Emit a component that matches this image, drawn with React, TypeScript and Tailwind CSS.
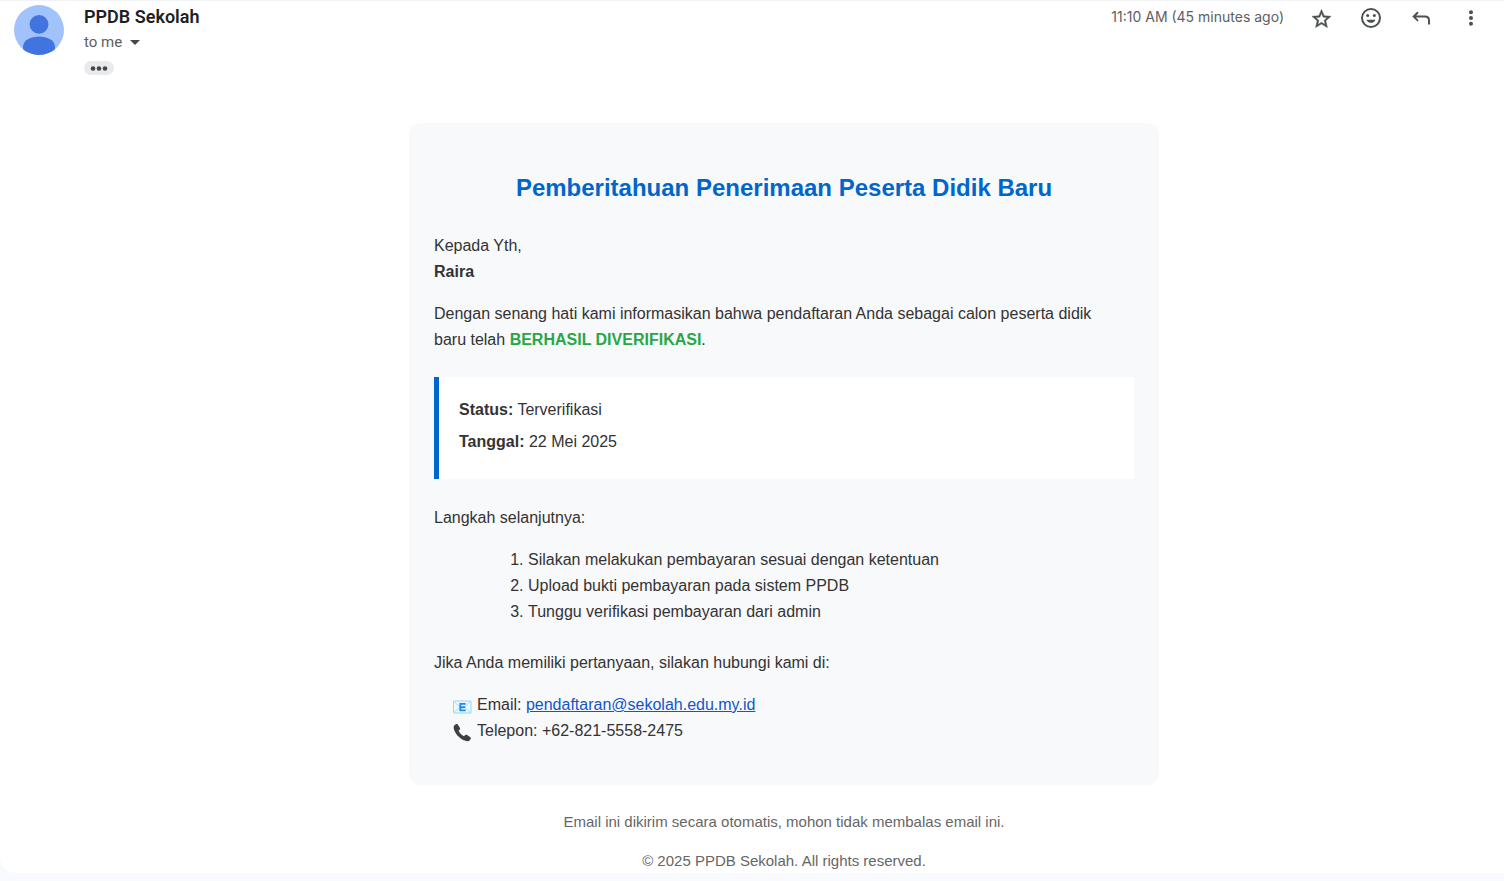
import type { ReactNode } from "react";

function IconButton({ label, children }: { label: string; children: ReactNode }) {
  return (
    <button type="button" aria-label={label} className="flex size-5 items-center justify-center text-[#4d5052]">
      {children}
    </button>
  );
}

function Avatar() {
  return (
    <svg viewBox="0 0 50 50" className="size-[50px] shrink-0" role="img" aria-label="PPDB Sekolah">
      <defs>
        <clipPath id="avatar-clip">
          <circle cx="25" cy="25" r="25" />
        </clipPath>
      </defs>
      <g clipPath="url(#avatar-clip)">
        <rect width="50" height="50" fill="#a1c2fa" />
        <circle cx="25" cy="19.3" r="9.4" fill="#4274e0" />
        <path d="M9 42c0-7 8-10.500 16-10.500S41 35 41 42v8H9z" fill="#4274e0" />
      </g>
    </svg>
  );
}

function Header() {
  return (
    <header className="flex items-start pr-[23px] pl-[14px] font-[family-name:Roboto,'Open_Sans',sans-serif]">
      <Avatar />
      <div className="ml-5 flex flex-1 flex-col items-start">
        <h1 className="text-lg leading-6 font-semibold text-[#1f1f1f]">PPDB Sekolah</h1>
        <button type="button" className="mt-px flex items-center gap-2 text-[15px] leading-6 text-[#5e5e5e]">
          to me
          <svg viewBox="0 0 10 5" className="h-[5px] w-[10px]" fill="#444746">
            <path d="M0 0h10L5 5z" />
          </svg>
        </button>
        <button
          type="button"
          aria-label="Show trimmed content"
          className="mt-[7px] flex h-[14px] w-[30px] items-center justify-center rounded-full bg-[#e8eaed]"
        >
          <svg viewBox="0 0 18 5" className="h-[5px] w-[18px]" fill="#444746">
            <circle cx="3" cy="2.5" r="2.3" />
            <circle cx="9" cy="2.5" r="2.3" />
            <circle cx="15" cy="2.5" r="2.3" />
          </svg>
        </button>
      </div>
      <div className="flex items-start gap-[30px]">
        <time className="-mr-[3px] font-[family-name:Inter,sans-serif] text-sm leading-6 text-[#5e5e5e]">
          11:10 AM (45 minutes ago)
        </time>
        <div className="flex gap-[30px] pt-[3px]">
          <IconButton label="Star">
            <svg viewBox="0 0 24 24" className="size-[23px] shrink-0" fill="currentColor" stroke="currentColor" strokeWidth="0.5">
              <path d="M22 9.74l-7.19-.62L12 2.5 9.19 9.13 2 9.74l5.46 4.73-1.64 7.03L12 17.77l6.180 3.730-1.630-7.030L22 9.740zM12 15.900l-3.760 2.270 1-4.280-3.320-2.880 4.380-.380L12 6.600l1.710 4.040 4.380.380-3.320 2.880 1 4.280L12 15.900z" />
            </svg>
          </IconButton>
          <IconButton label="Add reaction">
            <svg viewBox="0 0 20 20" className="size-5" fill="none">
              <circle cx="10" cy="10" r="9" stroke="currentColor" strokeWidth="2" />
              <circle cx="6.700" cy="7.500" r="1.500" fill="currentColor" />
              <circle cx="13.300" cy="7.500" r="1.500" fill="currentColor" />
              <path d="M5.500 11.700h9c-.700 1.900-2.400 3.100-4.500 3.100s-3.800-1.200-4.500-3.100z" fill="currentColor" />
            </svg>
          </IconButton>
          <IconButton label="Reply">
            <svg viewBox="0 0 20 20" className="size-5" fill="none" stroke="currentColor" strokeWidth="2">
              <path d="M7 4.300 2.700 8.600l4.300 4.300M2.700 8.600H14c2.600 0 4 1.600 4 4V16.500" />
            </svg>
          </IconButton>
          <IconButton label="More">
            <svg viewBox="0 0 20 20" className="size-5" fill="currentColor">
              <circle cx="10" cy="4.200" r="2" />
              <circle cx="10" cy="10" r="2" />
              <circle cx="10" cy="15.800" r="2" />
            </svg>
          </IconButton>
        </div>
      </div>
    </header>
  );
}

function EmailIcon() {
  return (
    <svg viewBox="0 0 20 20" className="mt-1 size-5 shrink-0" aria-hidden="true">
      <rect x="1.500" y="4" width="17.500" height="12" rx="0.500" fill="#eef9fe" stroke="#90d8f8" />
      <path d="M2 4.500 10.200 12l8.300-7.500M2 15.500l6-5.500M18.500 15.500l-6-5.500" fill="none" stroke="#90d8f8" strokeWidth="0.800" />
      <path d="M13.700 6.800H8.300v6.600h5.400M8.300 10.100h4.900" fill="none" stroke="#1e88e5" strokeWidth="1.800" />
    </svg>
  );
}

function PhoneIcon() {
  return (
    <svg viewBox="0 0 20 20" className="mt-1 size-5 shrink-0" aria-hidden="true">
      <path
        d="M2.200 2.500C3.500 1 4.900.5 5.600 1.300l2.400 3.600c.4.800-.1 1.600-1.400 2.600.7 2.300 2.900 4.700 5.500 5.700 1-1.300 1.800-1.800 2.600-1.400l3.700 2.500c.9.800.3 2.200-1.200 3.500-2 1.500-7-.5-10.700-4.200S.6 4.600 2.200 2.500z"
        fill="#3c4043"
      />
    </svg>
  );
}

export default function App() {
  return (
    <div className="min-h-screen bg-[#f8fafd] font-['Liberation_Sans',Arial,sans-serif]">
      <main className="rounded-bl-2xl border-t border-[#f1f3f4] bg-white pt-1">
        <Header />
        <div className="pr-5 pl-[84px] text-base leading-[26px] text-[#333333]">
          <article className="mx-auto mt-12 max-w-[750px] rounded-xl bg-[#f8f9fb] px-[25px] pt-[45px] pb-[41px]">
            <h2 className="text-center text-2xl leading-10 font-bold text-[#0066cc]">
              Pemberitahuan Penerimaan Peserta Didik Baru
            </h2>
            <p className="mt-[25px]">
              Kepada Yth,
              <br />
              <strong>Raira</strong>
            </p>
            <p className="mt-4 pr-4">
              Dengan senang hati kami informasikan bahwa pendaftaran Anda sebagai calon peserta didik baru telah{" "}
              <strong className="text-[#28a745]">BERHASIL DIVERIFIKASI</strong>.
            </p>
            <div className="mt-6 mb-[26px] border-l-[5px] border-[#0066cc] bg-white px-5 pt-5 pb-6">
              <p>
                <strong>Status:</strong> Terverifikasi
              </p>
              <p className="mt-[6px]">
                <strong>Tanggal:</strong> 22 Mei 2025
              </p>
            </div>
            <p>Langkah selanjutnya:</p>
            <ol className="mt-4 list-decimal pl-[94px]">
              <li>Silakan melakukan pembayaran sesuai dengan ketentuan</li>
              <li>Upload bukti pembayaran pada sistem PPDB</li>
              <li>Tunggu verifikasi pembayaran dari admin</li>
            </ol>
            <p className="mt-[25px]">Jika Anda memiliki pertanyaan, silakan hubungi kami di:</p>
            <ul className="mt-4 pl-[18px]">
              <li className="flex items-center gap-[5px]">
                <EmailIcon />
                <span>
                  Email:{" "}
                  <a href="mailto:pendaftaran@sekolah.edu.my.id" className="text-[#1155cc] underline">
                    pendaftaran@sekolah.edu.my.id
                  </a>
                </span>
              </li>
              <li className="flex items-center gap-[5px]">
                <PhoneIcon />
                <span>Telepon: +62-821-5558-2475</span>
              </li>
            </ul>
          </article>
          <footer className="mt-[25px] flex flex-col gap-[15px] text-center text-[15px] leading-6 text-[#666666]">
            <p>Email ini dikirim secara otomatis, mohon tidak membalas email ini.</p>
            <p>© 2025 PPDB Sekolah. All rights reserved.</p>
          </footer>
        </div>
      </main>
    </div>
  );
}
